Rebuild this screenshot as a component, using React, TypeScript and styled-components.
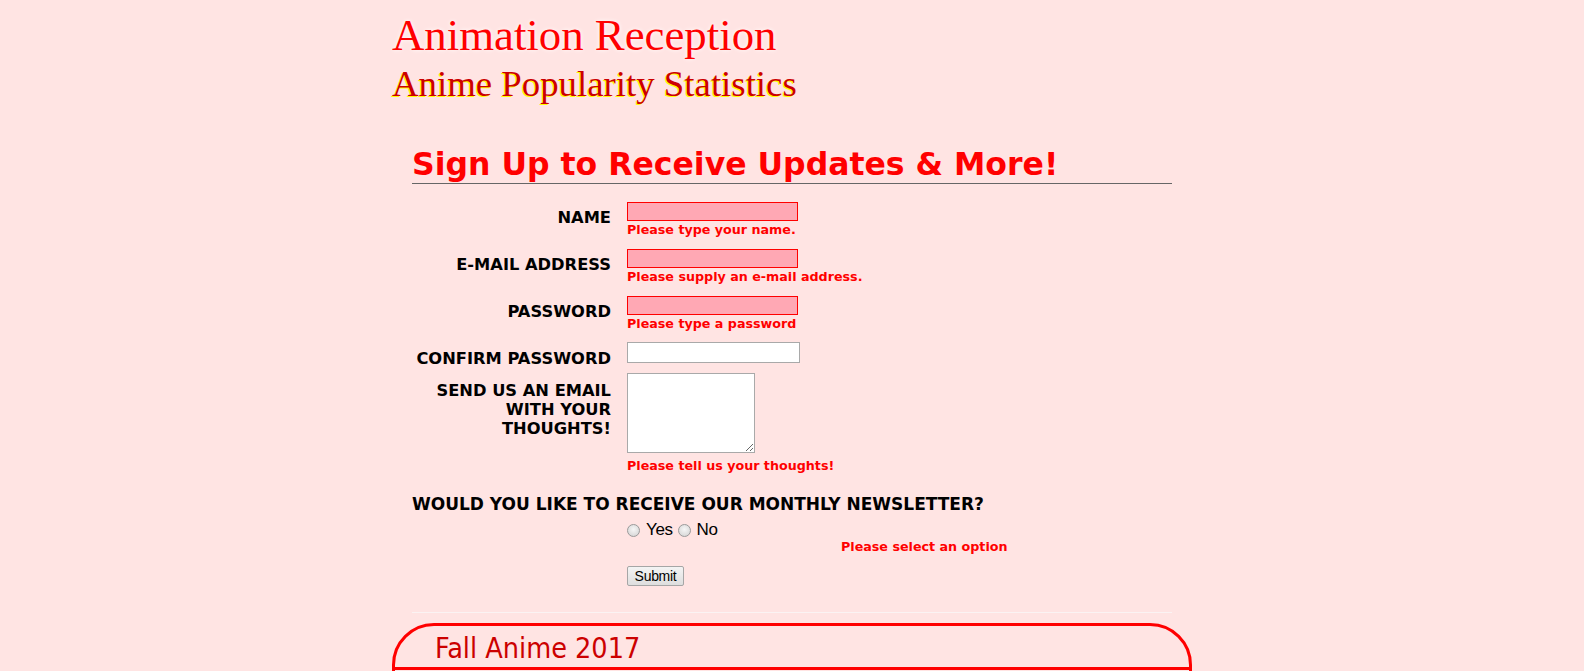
import React from "react";
import styled, { createGlobalStyle } from "styled-components";

const GlobalStyle = createGlobalStyle`
  html, body {
    margin: 0;
    padding: 0;
    background: #ffe4e3;
  }
  body {
    font-family: "DejaVu Sans", Verdana, sans-serif;
  }
`;

const Page = styled.div`
  width: 800px;
  margin: 0 auto;
  padding-top: 9px;
`;

const SiteTitle = styled.h1`
  margin: 0;
  font-family: "Liberation Serif", "Times New Roman", serif;
  font-weight: normal;
  font-size: 44.8px;
  line-height: 52px;
  color: #ff0000;
  text-shadow: 0 0 4px #ffffff;
`;

const SiteSubtitle = styled.h2`
  margin: 1px 0 0;
  font-family: "Liberation Serif", "Times New Roman", serif;
  font-weight: normal;
  font-size: 36.8px;
  line-height: 43px;
  color: #cc0000;
  text-shadow: -1px 1px 0 #ffff00;
`;

const SignupSection = styled.section`
  margin-top: 40px;
  padding: 0 20px;
`;

const SectionHeading = styled.h2`
  margin: 0;
  font-family: "DejaVu Sans", Verdana, sans-serif;
  font-weight: bold;
  font-size: 31.5px;
  line-height: 38px;
  color: #ff0000;
  border-bottom: 1px solid #666666;
`;

const Form = styled.form`
  margin-top: 18px;
  display: flex;
  flex-direction: column;
`;

const FieldRow = styled.div<{ $after: number }>`
  display: grid;
  grid-template-columns: 199px 1fr;
  column-gap: 16px;
  margin-bottom: ${(p) => p.$after}px;
`;

const Label = styled.label<{ $top: number }>`
  padding-top: ${(p) => p.$top}px;
  text-align: right;
  font-family: "DejaVu Sans", Verdana, sans-serif;
  font-weight: bold;
  font-size: 16.3px;
  line-height: 19px;
  color: #000000;
`;

const Field = styled.div`
  display: flex;
  flex-direction: column;
  align-items: flex-start;
`;

const TextInput = styled.input<{ $invalid?: boolean }>`
  box-sizing: border-box;
  width: ${(p) => (p.$invalid ? 171 : 173)}px;
  height: ${(p) => (p.$invalid ? 19 : 21)}px;
  margin: 0;
  padding: 1px 2px;
  border: 1px solid ${(p) => (p.$invalid ? "#ff0000" : "#a9a9a9")};
  border-radius: 0;
  background: ${(p) => (p.$invalid ? "#ffa8b4" : "#ffffff")};
  font-family: "Liberation Sans", Arial, sans-serif;
  font-size: 13px;
  outline: none;
`;

const TextArea = styled.textarea`
  box-sizing: border-box;
  width: 128px;
  height: 80px;
  margin: 0;
  padding: 2px;
  border: 1px solid #a9a9a9;
  border-radius: 0;
  background: #ffffff;
  font-family: "Liberation Mono", monospace;
  font-size: 13px;
  outline: none;
`;

const ErrorText = styled.span<{ $top?: number }>`
  display: block;
  margin-top: ${(p) => p.$top ?? 1}px;
  font-family: "DejaVu Sans", Verdana, sans-serif;
  font-weight: bold;
  font-size: 12.7px;
  line-height: 15px;
  color: #ff0000;
`;

const Question = styled.p`
  margin: 21px 0 0;
  font-family: "DejaVu Sans", Verdana, sans-serif;
  font-weight: bold;
  font-size: 17px;
  line-height: 20px;
  color: #000000;
`;

const RadioGroup = styled.div`
  display: flex;
  align-items: center;
  gap: 5px;
  margin: 7px 0 0 215px;
  height: 18px;
`;

const RadioOption = styled.label`
  display: flex;
  align-items: center;
  gap: 6px;
  font-family: "Liberation Sans Narrow", "Liberation Sans", Arial, sans-serif;
  font-stretch: condensed;
  font-size: 17px;
  letter-spacing: -0.4px;
  line-height: 18px;
  color: #000000;
`;

const Radio = styled.input`
  appearance: none;
  -webkit-appearance: none;
  box-sizing: border-box;
  width: 13px;
  height: 13px;
  margin: 0;
  border: 1px solid #9a9a9a;
  border-radius: 50%;
  background: radial-gradient(circle at 50% 40%, #f6f6f6 0%, #dcdcdc 70%, #c8c8c8 100%);
`;

const SelectError = styled(ErrorText)`
  margin: 0 0 0 429px;
`;

const SubmitButton = styled.button`
  box-sizing: border-box;
  width: 57px;
  height: 20px;
  margin: 12px 0 0 215px;
  padding: 0;
  border: 1px solid #a6a6a6;
  border-radius: 2px;
  background: linear-gradient(#f4f4f4, #dedede);
  font-family: "Liberation Sans Narrow", "Liberation Sans", Arial, sans-serif;
  font-stretch: condensed;
  font-size: 14px;
  letter-spacing: -0.3px;
  line-height: 18px;
  color: #000000;
`;

const Divider = styled.hr`
  margin: 26px 0 0;
  border: none;
  border-top: 1px solid #fbf3f3;
  height: 0;
`;

const SeasonBox = styled.section`
  margin-top: 10px;
  border: 3px solid #ff0000;
  border-radius: 42px 42px 0 0;
  min-height: 120px;
`;

const SeasonHeader = styled.h3`
  margin: 0;
  padding: 5px 0 0 40px;
  font-family: "DejaVu Sans Condensed", "DejaVu Sans", sans-serif;
  font-weight: normal;
  font-size: 28.5px;
  line-height: 36px;
  color: #cc0000;
  border-bottom: 3px solid #ff0000;
`;

const SeasonBody = styled.div`
  padding: 12px 40px;
  font-family: "DejaVu Sans", sans-serif;
  font-size: 16px;
  color: #000;
`;

export default function App() {
  return (
    <>
      <GlobalStyle />
      <Page>
        <SiteTitle>Animation Reception</SiteTitle>
        <SiteSubtitle>Anime Popularity Statistics</SiteSubtitle>

        <SignupSection>
          <SectionHeading>Sign Up to Receive Updates &amp; More!</SectionHeading>
          <Form onSubmit={(e) => e.preventDefault()}>
            <FieldRow $after={12}>
              <Label $top={6} htmlFor="name">NAME</Label>
              <Field>
                <TextInput id="name" $invalid />
                <ErrorText>Please type your name.</ErrorText>
              </Field>
            </FieldRow>
            <FieldRow $after={12}>
              <Label $top={6} htmlFor="email">E-MAIL ADDRESS</Label>
              <Field>
                <TextInput id="email" $invalid />
                <ErrorText>Please supply an e-mail address.</ErrorText>
              </Field>
            </FieldRow>
            <FieldRow $after={11}>
              <Label $top={6} htmlFor="pw">PASSWORD</Label>
              <Field>
                <TextInput id="pw" type="password" $invalid />
                <ErrorText>Please type a password</ErrorText>
              </Field>
            </FieldRow>
            <FieldRow $after={5}>
              <Label $top={7} htmlFor="pw2">CONFIRM PASSWORD</Label>
              <Field>
                <TextInput id="pw2" type="password" />
              </Field>
            </FieldRow>
            <FieldRow $after={0}>
              <Label $top={8} htmlFor="thoughts">
                SEND US AN EMAIL WITH YOUR THOUGHTS!
              </Label>
              <Field>
                <TextArea id="thoughts" />
                <ErrorText $top={5}>Please tell us your thoughts!</ErrorText>
              </Field>
            </FieldRow>

            <Question>WOULD YOU LIKE TO RECEIVE OUR MONTHLY NEWSLETTER?</Question>
            <RadioGroup>
              <RadioOption>
                <Radio type="radio" name="newsletter" value="yes" />
                Yes
              </RadioOption>
              <RadioOption>
                <Radio type="radio" name="newsletter" value="no" />
                No
              </RadioOption>
            </RadioGroup>
            <SelectError>Please select an option</SelectError>
            <SubmitButton type="submit">Submit</SubmitButton>
          </Form>
          <Divider />
        </SignupSection>

        <SeasonBox>
          <SeasonHeader>Fall Anime 2017</SeasonHeader>
          <SeasonBody />
        </SeasonBox>
      </Page>
    </>
  );
}
